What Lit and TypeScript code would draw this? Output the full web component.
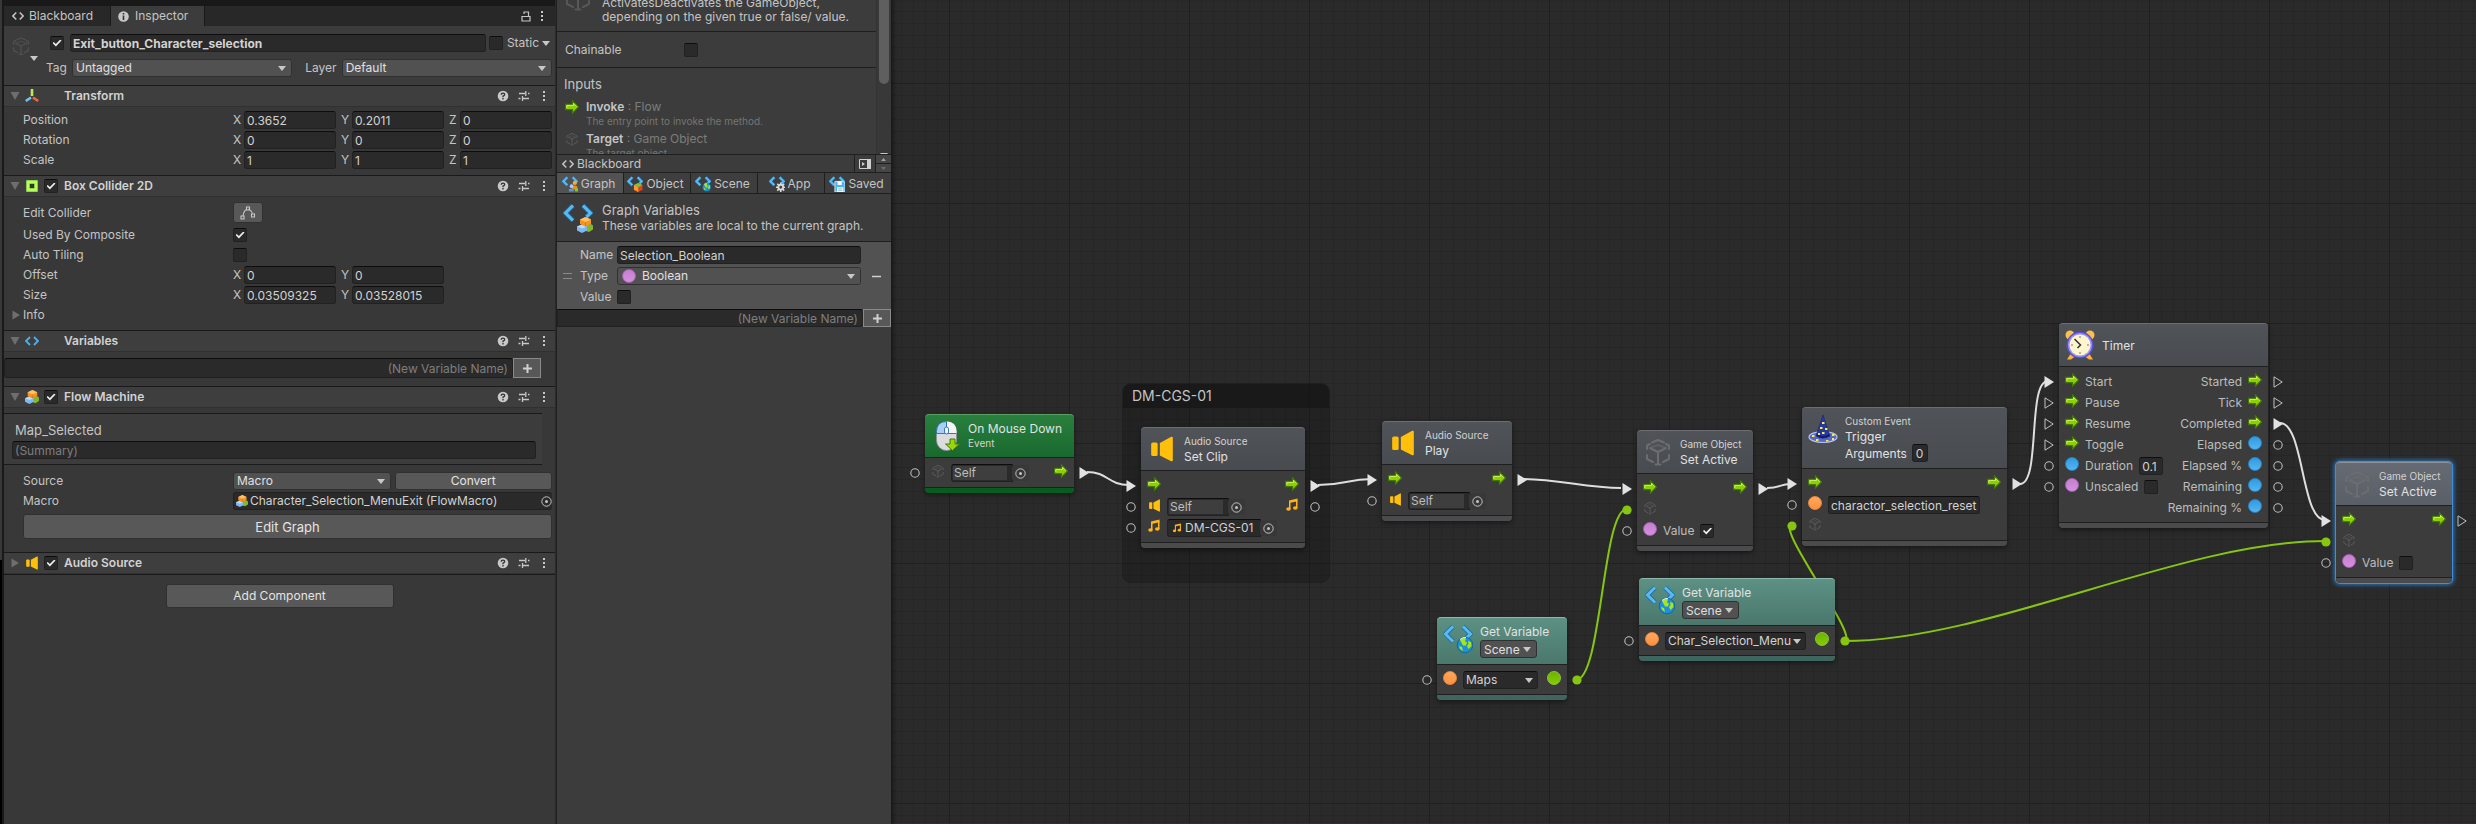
import { LitElement, html, css, svg, nothing, TemplateResult } from "lit";
import { customElement, property } from "lit/decorators.js";
import { classMap } from "lit/directives/class-map.js";
import { styleMap } from "lit/directives/style-map.js";

/* ---------- icons ---------- */

const flowArrow = html`<svg class="ico" width="14" height="14" viewBox="0 0 14 14" aria-hidden="true">
  <path d="M.7 4.3h6.8V.9l6 6.1-6 6.1V9.7H.7z" fill="#8fce00" stroke="#3f7a05" stroke-width="1.2"/>
  <path d="M1.8 8V5.400h6.800V3.400l3.400 3.400" fill="none" stroke="#cdf25e" stroke-width="1"/></svg>`;

const cube = (size = 14, tone = "#5a5a5a") => html`<svg class="ico" width=${size} height=${size} viewBox="0 0 30 30" fill="none" stroke=${tone} stroke-width="2" stroke-linejoin="round" aria-hidden="true">
  <path d="M9 5.500 15 3l6 2.500M4 12V8.500l3-1.500M23 7l3 1.500V12M4 18v4l6 3M26 18v4l-6 3M15 15v12M15 15l-8-4M15 15l8-4M12.500 27.500h5" stroke-linecap="round"/>
  <path d="M8 10.500 15 8l7 2.500" opacity=".55"/></svg>`;

const speaker = (size = 14) => html`<svg class="ico" width=${size} height=${size} viewBox="0 0 24 24" fill="#ffbf0a" aria-hidden="true">
  <rect x="2" y="6" width="6" height="12.500" rx="1.500"/><path d="M10 6.500 20.500 .800q1.500-.5 1.500 1v20.400q0 1.500-1.500 1L10 18z"/></svg>`;

const notes = (size = 14) => html`<svg class="ico" width=${size} height=${size} viewBox="0 0 14 14" fill="#ffb31a" aria-hidden="true">
  <path d="M4 2.400 12.500.600v2.600L5.500 4.700v6H4z"/><path d="M11 2h1.500v8H11z"/><ellipse cx="3.500" cy="11" rx="2.300" ry="1.800"/><ellipse cx="10.300" cy="10" rx="2.300" ry="1.800"/></svg>`;

const blocksShape = (x: number, y: number, s: number) => svg`<g transform="translate(${x} ${y}) scale(${s})">
  <path d="M10 8l4-1 2 1.500v4l-4 2.500-3-1z" fill="#7fb82e"/>
  <path d="M0 9.500 5 7.500l5 2v4L5 16l-5-2.500z" fill="#7db8f2"/><path d="M0 9.500l5-2 5 2-5 2z" fill="#b9dcff"/>
  <path d="M3 2.500 8.500 0 14 2.500v4.500L8.500 9.500 3 7z" fill="#f7941d"/><path d="M3 2.500 8.500 0 14 2.500 8.500 5z" fill="#ffc069"/>
  <path d="M8.500 5v4.500" stroke="#c96c08" stroke-width=".6"/></g>`;

const blocks = (size = 14) => html`<svg class="ico" width=${size} height=${size} viewBox="0 0 16 16" aria-hidden="true">${blocksShape(0, 0, 1)}</svg>`;

const chevrons = (w: number) => svg`
  <path d="M10 2.500 2.500 10 10 17.500" fill="none" stroke="#1d6fa8" stroke-width=${w + 1.6}/><path d="M20 2.500l7.500 7.500-4 4" fill="none" stroke="#1d6fa8" stroke-width=${w + 1.6}/>
  <path d="M10 2.500 2.500 10 10 17.500" fill="none" stroke="#5bb9f0" stroke-width=${w}/><path d="M20 2.500l7.500 7.500-4 4" fill="none" stroke="#5bb9f0" stroke-width=${w}/>`;

const badges: Record<string, TemplateResult> = {
  globe: svg`<circle cx="22" cy="21" r="7.800" fill="#1e8fdc" stroke="#0d5f9c" stroke-width=".8"/><path d="M17 16q3-3 6-1.500l-1 3 2 1-1 3h-3zM25 17l3 1 .5 4-3 3-1.500-3 1.500-2zM16 22l3 1 1 4-3-2z" fill="#a8e619"/><path d="M17 15.500q3-2.500 6-2" stroke="#e8fbff" fill="none"/>`,
  blocks: blocksShape(14, 14, 1),
  people: svg`<circle cx="24" cy="13" r="4" fill="#f9a63a"/><path d="M19 25v-5q5-4 10 0v5z" fill="#f28a17"/><circle cx="18" cy="19" r="3.500" fill="#9fd0ff"/><path d="M13 29v-4q5-3 9 0v4z" fill="#4f9be0"/><path d="M24 23h6v6h-6z" fill="#7ecb2d"/>`,
  cube: svg`<path d="M13 17l8-4 8 4v9l-8 4-8-4z" fill="#e8401c"/><path d="M13 17l8-4 8 4-8 4z" fill="#78c832"/><path d="M13 17l8 4v9l-8-4z" fill="#ff9a2e"/>`,
  gear: svg`<path d="M22 12v18M13 21h18M15.500 14.500l13 13M28.500 14.500l-13 13" stroke="#d9d9d9" stroke-width="3"/><circle cx="22" cy="21" r="4.500" fill="#444" stroke="#d9d9d9" stroke-width="3.500"/>`,
  disk: svg`<path d="M11 10h16l3 3v17H11z" fill="#4fb3ea" stroke="#e6f6ff" stroke-width="1.500"/><path d="M16 10h8v7h-8zM15 21h12v9H15z" fill="#f2fbff"/><path d="M17 24h8M17 27h8" stroke="#3b8ec0"/>`,
};

const variableIcon = (badge: string, size = 30) => html`<svg class="ico" width=${size} height=${size} viewBox="0 0 30 30" aria-hidden="true">${chevrons(size > 20 ? 3 : 4)}${badges[badge]}</svg>`;

const mouse = html`<svg class="ico" width="30" height="30" viewBox="0 0 30 30" aria-hidden="true">
  <rect x="5.500" y=".5" width="20" height="29" rx="10" fill="#dcdcdf" stroke="#8a8f98" stroke-width=".8"/>
  <path d="M15.500.500q10 0 10 10v2h-10z" fill="#f5f5f7"/><path d="M5.500 12.500v-2q0-10 10-10v12z" fill="#a9d0f2" stroke="#2e6fb5"/><path d="M5.500 12.500h20" stroke="#3c77b5"/>
  <rect x="13.500" y="6" width="4" height="7" rx="2" fill="#eef6ff" stroke="#3c77b5"/>
  <path d="M19 18h5v5h4.500L21.500 29.500 14.500 23H19z" fill="#9ad60a" stroke="#3f7a05"/></svg>`;

const hat = html`<svg class="ico" width="30" height="30" viewBox="0 0 30 30" aria-hidden="true">
  <ellipse cx="15" cy="23" rx="14" ry="5.500" fill="#5668c8" stroke="#b9c3f5" stroke-width="1.200"/>
  <path d="M15 1 8 22q7 4.500 14 0z" fill="#2439a8" stroke="#15247a" stroke-width=".6"/><path d="M9 21q6 4 12.500 0" stroke="#101c66" stroke-width="2" fill="none"/>
  <path fill="#ffe93b" d="M14 8h2.500v2H14zM12 13h2.500v2H12zM17 14h2.500v2H17zM14 18h2.500v2H14zM10 19h2v2h-2zM4 21h2.500v2H4zM24 20h2.500v2H24zM8 25h2.500v2H8zM18 26h2.500v1.500H18zM24 24h2v2h-2z"/></svg>`;

const clock = html`<svg class="ico" width="30" height="30" viewBox="0 0 30 30" aria-hidden="true">
  <circle cx="5" cy="5" r="4.500" fill="#ffbf4d"/><circle cx="25" cy="5" r="4.500" fill="#ffbf4d"/><path d="M6 23l-4 6.500h4l4-3zM24 23l4 6.500h-4l-4-3z" fill="#ffb22e"/>
  <circle cx="15" cy="15" r="13.500" fill="#5a4fcf"/><circle cx="15" cy="15" r="12" fill="#9a94f0"/><circle cx="15" cy="15" r="10.500" fill="#fff6cf"/>
  <path d="M15 6v2M15 22v2M6 15h2M22 15h2" stroke="#777"/><path d="M9.500 9l6 6-3 3" fill="none" stroke="#333" stroke-width="1.500"/></svg>`;

const axes = html`<svg class="ico" width="14" height="14" viewBox="0 0 14 14" stroke-width="2.600" aria-hidden="true"><path d="M7 0v7" stroke="#b5f04a"/><path d="M6 8.500.8 12" stroke="#6fc6f5"/><path d="M8 8.500l5.200 3.500" stroke="#f0683a"/></svg>`;
const colliderIcon = html`<svg class="ico" width="14" height="14" viewBox="0 0 14 14" aria-hidden="true"><path d="M3 3h8v8H3z" fill="#2e3a20" stroke="#b4ff5a" stroke-width="3.400"/></svg>`;
const codeIcon = (tone: string, size = 14) => html`<svg class="ico" width=${size} height=${size} viewBox="0 0 14 14" fill="none" stroke=${tone} stroke-width="1.800" aria-hidden="true"><path d="M5 3 1 7l4 4M9 3l4 4-4 4"/></svg>`;
const foldout = (open: boolean) => html`<svg class="ico" width="10" height="10" viewBox="0 0 10 10" fill="#6e6e6e" aria-hidden="true"><path d=${open ? "M.5 1h9L5 9z" : "M1.500.5 9 5l-7.500 4.500z"}/></svg>`;
const dots = html`<svg class="ico" width="10" height="14" viewBox="0 0 10 14" fill="#c8c8c8" aria-hidden="true"><path d="M4 2h2v2H4zM4 6h2v2H4zM4 10h2v2H4z"/></svg>`;
const help = html`<svg class="ico" width="12" height="12" viewBox="0 0 12 12" aria-hidden="true"><circle cx="6" cy="6" r="5.300" fill="#c8c8c8"/><path d="M4.300 4.800q0-1.700 1.700-1.700t1.700 1.400Q7.700 5.600 6 6.200v1M6 8v1.400" fill="none" stroke="#333" stroke-width="1.300"/></svg>`;
const sliders = html`<svg class="ico" width="12" height="12" viewBox="0 0 12 12" stroke="#c8c8c8" stroke-width="1.300" aria-hidden="true"><path d="M1 3.500h6M10 3.500h1.500M7.800 1v5M.5 8.500h2M5 8.500h6M4.500 6v5"/></svg>`;
const info = html`<svg class="ico" width="11" height="11" viewBox="0 0 11 11" aria-hidden="true"><circle cx="5.500" cy="5.500" r="5.300" fill="#c8c8c8"/><path d="M5.500 2v1.500M5.500 4.500V9" stroke="#333" stroke-width="1.600"/></svg>`;
const lock = html`<svg class="ico" width="10" height="11" viewBox="0 0 10 11" fill="none" stroke="#c4c4c4" stroke-width="1.200" aria-hidden="true"><path d="M1 5.500h8V10H1zM3 3V1h4.500v4.500"/></svg>`;
const vertices = html`<svg class="ico" width="16" height="14" viewBox="0 0 16 14" fill="none" stroke="#c8c8c8" stroke-width="1.100" aria-hidden="true"><path d="M3 10Q3.500 5 7 3M8.500 3Q12 5 12.500 8M6.500 1h3v3h-3zM1 10h3v3H1zM11.500 8h3v3h-3z"/></svg>`;
const caret = html`<svg class="caret" width="8" height="5" viewBox="0 0 8 5" fill="#c8c8c8" aria-hidden="true"><path d="M0 0h8L4 5z"/></svg>`;
const target = html`<svg class="ico" width="11" height="11" viewBox="0 0 11 11" fill="none" stroke="#c4c4c4" aria-hidden="true"><circle cx="5.500" cy="5.500" r="4.700"/><circle cx="5.500" cy="5.500" r="1.500" fill="#c4c4c4" stroke="none"/></svg>`;
const plus = html`<svg class="ico" width="9" height="9" viewBox="0 0 9 9" stroke="#d0d0d0" stroke-width="2" aria-hidden="true"><path d="M0 4.500h9M4.500 0v9"/></svg>`;
const minus = html`<svg class="ico" width="9" height="9" viewBox="0 0 9 9" stroke="#d0d0d0" stroke-width="1.500" aria-hidden="true"><path d="M0 4.500h9"/></svg>`;
const dock = html`<svg class="ico" width="12" height="10" viewBox="0 0 12 10" aria-hidden="true"><path d="M.5.500h11v9H.5z" fill="none" stroke="#d0d0d0"/><path d="M8 0h4v10H8zM3 3l3 2-3 2z" fill="#d0d0d0"/></svg>`;

/* ---------- shared styles ---------- */

const base = css`
  * { box-sizing: border-box; }
  :host { font: 12px/16px Inter, "Liberation Sans", sans-serif; color: #c4c4c4; }
  .ico, .caret { display: block; flex: none; }
  button, input, select { font: inherit; color: #d2d2d2; margin: 0; }
  button { display: inline-flex; align-items: center; justify-content: center; padding: 0; border: 1px solid #303030; border-radius: 3px; background: #585858; color: #e4e4e4; }
  button.plain { border: 0; background: none; }
  input.field { display: block; width: 100%; min-width: 0; height: 18px; padding: 0 2px; border: 1px solid #212121; border-top-color: #0d0d0d; border-radius: 3px; background: #2a2a2a; outline: 0; }
  input::placeholder { color: #7e7e7e; opacity: 1; }
  input[type="checkbox"] { appearance: none; display: grid; place-items: center; flex: none; width: 14px; height: 14px; border: 1px solid #212121; border-top-color: #0d0d0d; border-radius: 2px; background: #2a2a2a; }
  input[type="checkbox"]:checked::before { content: ""; width: 9px; height: 7px; background: #eee; clip-path: polygon(0 50%, 14% 34%, 37% 64%, 86% 0, 100% 14%, 38% 100%); }
  .drop { display: grid; align-items: center; height: 18px; border: 1px solid #303030; border-radius: 3px; background: #515151; }
  .drop > * { grid-area: 1 / 1; }
  .drop .caret { justify-self: end; margin-right: 5px; pointer-events: none; }
  .drop select { appearance: none; width: 100%; min-width: 0; height: 16px; padding: 0 3px; border: 0; background: none; color: #e0e0e0; outline: 0; }
  .ball { display: block; flex: none; width: 14px; height: 14px; border: 1px solid; border-radius: 50%; }
  .ball.orange { background: linear-gradient(#ffa75c, #ff9140); border-color: #e8893e; }
  .ball.pink { background: linear-gradient(#c57fd0, #d490de); border-color: #a85fb5; }
  .ball.blue { background: linear-gradient(#2f9be2, #56b5f0); border-color: #2b83c4; }
  .ball.green { background: linear-gradient(#6bb300, #85cc00); border-color: #8cc63a; }
`;

const dropDown = (label: string, value: string, cls = "") =>
  html`<span class="drop ${cls}"><select aria-label=${label}><option>${value}</option></select>${caret}</span>`;

/* ---------- inspector ---------- */

@customElement("inspector-panel")
class InspectorPanel extends LitElement {
  static styles = [base, css`
    :host { display: flex; flex-direction: column; background: #383838; }
    .strip { height: 6px; background: #191919; }
    .tabs { display: flex; height: 20px; background: #282828; }
    .tab { gap: 5px; padding: 0 17px 0 8px; border: 0; border-radius: 0; background: none; color: #c4c4c4; }
    .tab.on { gap: 6px; padding: 0 16px 0 7px; border: solid #191919; border-width: 0 1px; background: #3c3c3c; }
    .tabs .end { display: flex; align-items: center; gap: 6px; margin-left: auto; padding-right: 8px; }
    .object { display: grid; grid-template-columns: 42px 1fr; height: 59px; padding-top: 8px; background: #3c3c3c; }
    .thumb { display: grid; align-content: start; justify-items: end; padding: 2px 8px 0 7px; }
    .thumb .ico { justify-self: start; }
    .lines { display: grid; align-content: start; gap: 7px; }
    .line { display: flex; align-items: center; height: 18px; }
    .line.top { gap: 3px; padding: 0 5px 0 4px; }
    .line.top .field { flex: 1; margin-left: 3px; font-weight: 700; }
    .line.top label { display: flex; align-items: center; gap: 4px; }
    .line.pick { gap: 5px; padding-right: 3px; }
    .line.pick .tag { flex: 22; margin-right: 8px; }
    .line.pick .layer { flex: 21; }
    section { border-top: 1px solid #1a1a1a; }
    h2 { display: flex; align-items: center; gap: 5px; height: 21px; margin: 0; padding: 0 6px; border-bottom: 1px solid #303030; background: #3e3e3e; font: inherit; font-weight: 600; color: #d2d2d2; }
    h2 .title { flex: 1; }
    h2 .slot { width: 15px; }
    h2 .tools { display: flex; align-items: center; gap: 9px; }
    .rows { display: grid; gap: 2px; padding: 4px 3px 6px 19px; }
    .row { display: grid; grid-template-columns: 210px 1fr; align-items: center; height: 18px; }
    .row.tall { height: 23px; }
    .axes { display: grid; grid-template-columns: repeat(3, 1fr); gap: 5px; }
    .axes label { display: grid; grid-template-columns: 9px 1fr; gap: 2px; align-items: center; }
    .edit { width: 30px; height: 21px; }
    .info { display: flex; align-items: center; gap: 2px; height: 18px; margin-left: -12px; }
    .new { display: flex; padding: 6px 14px 8px 0; }
    .new .field { height: 20px; padding-right: 4px; text-align: right; }
    .new button { flex: none; width: 28px; height: 20px; border-color: #8a8a8a; border-radius: 0; }
    .graph { margin: 5px 13px 0 0; padding: 7px 6px 5px 8px; border: solid #1a1a1a; border-width: 1px 0; background: #3c3c3c; }
    .graph h3 { margin: 0 0 2px 3px; font: inherit; font-size: 13px; line-height: 18px; }
    .split { display: grid; grid-template-columns: 1fr 1fr; gap: 4px; }
    .split button { height: 18px; }
    .wide { height: 25px; margin: 2px 0 7px; font-size: 13px; }
    .ref { display: grid; grid-template-columns: 14px 1fr 11px; align-items: center; height: 18px; padding-left: 2px; border: 1px solid #212121; border-right: 0; border-radius: 3px; background: #2a2a2a; }
    .ref input { min-width: 0; padding: 0; border: 0; background: none; }
    .flow { padding-top: 7px; }
    .tail { display: grid; justify-items: center; padding: 9px 0; border-top: 1px solid #1a1a1a; }
    .add { width: 228px; height: 24px; }
  `];

  private heading(title: string, icon: TemplateResult, open: boolean, toggle: boolean) {
    return html`<h2>${foldout(open)}${icon}
      <span class="slot">${toggle ? html`<input type="checkbox" checked aria-label="${title} enabled">` : nothing}</span>
      <span class="title">${title}</span>
      <span class="tools">
        <button class="plain" aria-label="Help">${help}</button><button class="plain" aria-label="Presets">${sliders}</button><button class="plain" aria-label="More">${dots}</button>
      </span></h2>`;
  }

  private vector(name: string, values: string[]) {
    return html`<div class="row"><span>${name}</span><div class="axes">
      ${values.map((v, i) => html`<label>${"XYZ"[i]}<input class="field" .value=${v} aria-label="${name} ${"XYZ"[i]}"></label>`)}</div></div>`;
  }

  render() {
    return html`
      <div class="strip"></div>
      <nav class="tabs">
        <button class="tab">${codeIcon("#c4c4c4", 12)}Blackboard</button>
        <button class="tab on">${info}Inspector</button>
        <span class="end">${lock}${dots}</span>
      </nav>
      <header class="object">
        <div class="thumb">${cube(20, "#505050")}${caret}</div>
        <div class="lines">
          <div class="line top">
            <input type="checkbox" checked aria-label="Active">
            <input class="field" .value=${"Exit_button_Character_selection"} aria-label="Object name">
            <label><input type="checkbox">Static</label>${caret}
          </div>
          <div class="line pick">Tag${dropDown("Tag", "Untagged", "tag")}Layer${dropDown("Layer", "Default", "layer")}</div>
        </div>
      </header>
      <section>
        ${this.heading("Transform", axes, true, false)}
        <div class="rows">
          ${this.vector("Position", ["0.3652", "0.2011", "0"])}
          ${this.vector("Rotation", ["0", "0", "0"])}
          ${this.vector("Scale", ["1", "1", "1"])}
        </div>
      </section>
      <section>
        ${this.heading("Box Collider 2D", colliderIcon, true, true)}
        <div class="rows">
          <div class="row tall"><span>Edit Collider</span><button class="edit" aria-label="Edit Collider">${vertices}</button></div>
          <div class="row"><label for="comp">Used By Composite</label><input id="comp" type="checkbox" checked></div>
          <div class="row"><label for="tile">Auto Tiling</label><input id="tile" type="checkbox"></div>
          ${this.vector("Offset", ["0", "0"])}
          ${this.vector("Size", ["0.03509325", "0.03528015"])}
          <div class="info">${foldout(false)}Info</div>
        </div>
      </section>
      <section>
        ${this.heading("Variables", codeIcon("#4fb0ea"), true, false)}
        <div class="new"><input class="field" placeholder="(New Variable Name)" aria-label="New variable name"><button aria-label="Add variable">${plus}</button></div>
      </section>
      <section>
        ${this.heading("Flow Machine", blocks(14), true, true)}
        <div class="graph"><h3>Map_Selected</h3><input class="field" placeholder="(Summary)" aria-label="Summary"></div>
        <div class="rows flow">
          <div class="row"><span>Source</span><div class="split">${dropDown("Source", "Macro")}<button>Convert</button></div></div>
          <div class="row"><label for="macro">Macro</label><div class="ref">${blocks(12)}<input id="macro" .value=${"Character_Selection_MenuExit (FlowMacro)"}><button class="plain" aria-label="Pick macro">${target}</button></div></div>
          <button class="wide">Edit Graph</button>
        </div>
      </section>
      <section>${this.heading("Audio Source", speaker(14), false, true)}</section>
      <div class="tail"><button class="add">Add Component</button></div>`;
  }
}

/* ---------- unit help and blackboard ---------- */

@customElement("blackboard-panel")
class BlackboardPanel extends LitElement {
  static styles = [base, css`
    :host { display: flex; flex-direction: column; border-left: 1px solid #202020; background: #3c3c3c; }
    .help { display: grid; grid-template-columns: 1fr 15px; height: 154px; overflow: hidden; }
    .page { min-width: 0; }
    .intro { display: flex; gap: 9px; height: 50px; margin-top: -18px; padding-left: 6px; border-bottom: 1px solid #1f1f1f; }
    .intro p { margin: 14px 0 0; line-height: 14px; }
    .chain { display: grid; grid-template-columns: 119px 1fr; align-items: center; height: 36px; padding-left: 8px; border-bottom: 1px solid #1f1f1f; }
    .page h3 { margin: 7px 0 6px 7px; font: inherit; font-size: 13px; line-height: 18px; }
    .port { display: grid; grid-template-columns: 14px 1fr; column-gap: 7px; align-items: center; padding-left: 8px; height: 32px; align-content: start; color: #7c7c7c; }
    .port b { font-weight: 600; color: #c4c4c4; }
    .port small { grid-column: 2; font-size: 10px; line-height: 12px; color: #757575; }
    .bar { display: grid; grid-template-rows: 84px 1fr; justify-items: center; border-left: 1px solid #343434; background: #383838; }
    .bar i { width: 10px; border-radius: 0 0 5px 5px; background: #5f5f5f; }
    .bar .caret { align-self: end; margin-bottom: 5px; }
    .title { display: flex; align-items: center; height: 19px; border: solid #1f1f1f; border-width: 1px 0; }
    .title span { flex: 1; display: flex; align-items: center; gap: 3px; padding-left: 5px; }
    .title .dock { width: 22px; height: 17px; border: solid #1f1f1f; border-width: 0 1px; border-radius: 0; background: none; }
    .spin { display: grid; width: 15px; height: 17px; background: #1f1f1f; gap: 1px; }
    .spin i { display: grid; place-items: center; background: #464646; }
    .spin .caret { width: 5px; height: 3px; opacity: .7; }
    .spin i:first-child .caret { rotate: 180deg; }
    .spin i:last-child .caret { opacity: .3; }
    .tabs { display: grid; grid-template-columns: repeat(5, 1fr); gap: 1px; height: 21px; border-bottom: 1px solid #1f1f1f; background: #1f1f1f; }
    .tabs button { gap: 3px; padding: 1px 3px 0 0; border: 0; border-radius: 0; background: #3e3e3e; color: #c4c4c4; }
    .tabs button.on { background: #525252; }
    .about { display: flex; gap: 9px; align-items: center; height: 48px; padding-left: 6px; border-bottom: 1px solid #1f1f1f; }
    .about h3 { margin: 0; font: inherit; font-size: 13px; line-height: 16px; }
    .about p { margin: 0; }
    .vars { display: grid; grid-template-columns: 37px 244px 1fr; grid-template-rows: repeat(3, 18px); align-items: center; gap: 3px 0; height: 67px; padding: 4px 0 0 23px; background: #525252; }
    .vars .type { display: grid; grid-template-columns: 17px 1fr; align-items: center; height: 18px; padding-left: 4px; border: 1px solid #303030; border-radius: 3px; background: #515151; }
    .vars .drop { border: 0; height: 16px; }
    .vars > button { justify-self: center; grid-row: 1 / 4; grid-column: 3; }
    .vars label { grid-column: 1; }
    .grip { display: flex; align-items: center; gap: 8px; margin-left: -17px; }
    .grip::before { content: ""; width: 9px; height: 4px; border: solid #8a8a8a; border-width: 1px 0; }
    .new { display: flex; height: 18px; }
    .new .field { border-radius: 0 3px 3px 0; text-align: right; padding-right: 4px; }
    .new button { flex: none; width: 28px; height: 18px; border-color: #8a8a8a; border-radius: 0; }
  `];

  render() {
    const tabs = [["Graph", "people"], ["Object", "cube"], ["Scene", "globe"], ["App", "gear"], ["Saved", "disk"]];
    return html`
      <div class="help">
        <div class="page">
          <div class="intro">${cube(30, "#575757")}<p>ActivatesDeactivates the GameObject,<br>depending on the given true or false/ value.</p></div>
          <div class="chain"><label for="chain">Chainable</label><input id="chain" type="checkbox"></div>
          <h3>Inputs</h3>
          <div class="port">${flowArrow}<span><b>Invoke</b> : Flow</span><small>The entry point to invoke the method.</small></div>
          <div class="port">${cube(14)}<span><b>Target</b> : Game Object</span><small>The target object</small></div>
        </div>
        <div class="bar"><i></i>${caret}</div>
      </div>
      <div class="title"><span>${codeIcon("#c4c4c4", 12)}Blackboard</span><button class="dock" aria-label="Dock">${dock}</button><div class="spin"><i>${caret}</i><i>${caret}</i></div></div>
      <nav class="tabs">${tabs.map(([name, badge], i) => html`<button class=${classMap({ on: i === 0 })}>${variableIcon(badge, 16)}${name}</button>`)}</nav>
      <div class="about">${variableIcon("blocks")}<div><h3>Graph Variables</h3><p>These variables are local to the current graph.</p></div></div>
      <div class="vars">
        <label for="name">Name</label><input id="name" class="field" .value=${"Selection_Boolean"}>
        <label class="grip" for="type">Type</label><span class="type"><span class="ball pink"></span><span class="drop"><select id="type"><option>Boolean</option></select>${caret}</span></span>
        <label for="value">Value</label><input id="value" type="checkbox">
        <button class="plain" aria-label="Remove variable">${minus}</button>
      </div>
      <div class="new"><input class="field" placeholder="(New Variable Name)" aria-label="New variable name"><button aria-label="Add variable">${plus}</button></div>`;
  }
}

/* ---------- flow graph ---------- */

type Socket = "flow" | "flow-on" | "value" | "value-on";

interface Port {
  socket: Socket;
  icon: unknown;
  body?: unknown;
}

interface UnitData {
  x: number;
  y: number;
  w: number;
  tone?: string;
  icon: unknown;
  head: unknown;
  ins: Port[];
  outs: Port[];
}

const socketShape = (kind: Socket) => {
  const shapes: Record<Socket, unknown> = {
    "flow": svg`<path d="M1 .8v10.400L9.200 6z" fill="none" stroke="#c0c0c0"/>`,
    "flow-on": svg`<path d="M.5 0v12L10 6z" fill="#e2e2e2"/>`,
    "value": svg`<circle cx="5" cy="6" r="4.200" fill="none" stroke="#bdbdbd" stroke-width="1.100"/>`,
    "value-on": svg`<circle cx="5" cy="6" r="4.600" fill="#86c610"/>`,
  };
  return html`<svg class="socket" width="10" height="12" viewBox="0 0 10 12" aria-hidden="true">${shapes[kind]}</svg>`;
};

const ball = (tone: string) => html`<span class="ball ${tone}"></span>`;
const picker = (value: string, filled = false) => html`<span class="picker">
  <span class=${classMap({ box: true, filled })}>${filled ? notes(10) : nothing}<input .value=${value} aria-label="Target"></span>
  <button aria-label="Pick">${target}</button></span>`;
const check = (label: string, on = false) => html`<label class="tick">${label}<input type="checkbox" ?checked=${on}></label>`;
const titles = (small: string, big: string) => html`<small>${small}</small><span>${big}</span>`;
const combo = (value: string, cls: string) => html`<span class="combo ${cls}"><select aria-label="Variable"><option>${value}</option></select>${caret}</span>`;
const sceneHead = html`<span>Get Variable</span>${dropDown("Scope", "Scene", "scope")}`;

const flowIn: Port = { socket: "flow-on", icon: flowArrow };

const setActive = (x: number, y: number, tone: string, on: boolean, out: Socket): UnitData => ({
  x, y, w: 116, tone, icon: cube(30, "#6b6d70"), head: titles("Game Object", "Set Active"),
  ins: [flowIn, { socket: "value-on", icon: cube(14) }, { socket: "value", icon: ball("pink"), body: check("Value", on) }],
  outs: [{ socket: out, icon: flowArrow }],
});

const getVariable = (x: number, y: number, w: number, name: string, cls: string): UnitData => ({
  x, y, w, tone: "teal", icon: variableIcon("globe"), head: sceneHead,
  ins: [{ socket: "value", icon: ball("orange"), body: combo(name, cls) }],
  outs: [{ socket: "value-on", icon: ball("green") }],
});

const units: UnitData[] = [
  {
    x: 34, y: 414, w: 149, tone: "green", icon: mouse, head: html`<span>On Mouse Down</span><small>Event</small>`,
    ins: [{ socket: "value", icon: cube(14), body: picker("Self") }],
    outs: [{ socket: "flow-on", icon: flowArrow }],
  },
  {
    x: 250, y: 427, w: 164, icon: speaker(26), head: titles("Audio Source", "Set Clip"),
    ins: [flowIn, { socket: "value", icon: speaker(13), body: picker("Self") }, { socket: "value", icon: notes(), body: picker("DM-CGS-01", true) }],
    outs: [{ socket: "flow-on", icon: flowArrow }, { socket: "value", icon: notes() }],
  },
  {
    x: 491, y: 421, w: 130, icon: speaker(26), head: titles("Audio Source", "Play"),
    ins: [flowIn, { socket: "value", icon: speaker(13), body: picker("Self") }],
    outs: [{ socket: "flow-on", icon: flowArrow }],
  },
  setActive(746, 430, "", true, "flow-on"),
  {
    x: 911, y: 407, w: 205, tone: "hat", icon: hat,
    head: html`<small>Custom Event</small><span>Trigger</span><label class="args">Arguments<input class="field" .value=${"0"}></label>`,
    ins: [flowIn, { socket: "value", icon: ball("orange"), body: html`<input class="field event" .value=${"charactor_selection_reset"} aria-label="Event name">` }, { socket: "value-on", icon: cube(14) }],
    outs: [{ socket: "flow-on", icon: flowArrow }],
  },
  {
    x: 1168, y: 323, w: 209, icon: clock, head: html`<span>Timer</span>`,
    ins: [
      { ...flowIn, body: "Start" },
      ...["Pause", "Resume", "Toggle"].map((body): Port => ({ socket: "flow", icon: flowArrow, body })),
      { socket: "value", icon: ball("blue"), body: html`<label class="tick">Duration<input class="field seconds" .value=${"0.1"}></label>` },
      { socket: "value", icon: ball("pink"), body: check("Unscaled") },
    ],
    outs: [
      { socket: "flow", icon: flowArrow, body: "Started" },
      { socket: "flow", icon: flowArrow, body: "Tick" },
      { socket: "flow-on", icon: flowArrow, body: "Completed" },
      ...["Elapsed", "Elapsed %", "Remaining", "Remaining %"].map((body): Port => ({ socket: "value", icon: ball("blue"), body })),
    ],
  },
  setActive(1445, 462, "picked", false, "flow"),
  getVariable(546, 617, 130, "Maps", "short"),
  getVariable(748, 578, 196, "Char_Selection_Menu", "long"),
];

@customElement("flow-unit")
class FlowUnit extends LitElement {
  static styles = [base, css`
    :host { display: block; color: #bdbdbd; }
    .unit { border-radius: 4px; background: #3c3c3c; box-shadow: 0 2px 5px rgba(0, 0, 0, .45); }
    header { display: flex; gap: 7px; min-height: 42px; padding: 6px; border-top: 1px solid #6b6e72; border-radius: 4px 4px 0 0; background: linear-gradient(#505358, #484b50); color: #e2e2e2; }
    .mark { display: grid; place-items: center; width: 30px; height: 30px; flex: none; }
    .head { display: grid; align-content: center; justify-items: start; line-height: 15px; white-space: nowrap; }
    .head small { font-size: 10px; line-height: 15px; color: #d2d2d2; }
    .rows { display: grid; gap: 3px; padding: 6px 0 5px; border: solid #1f1f1f; border-width: 1px 0; }
    .row { display: flex; justify-content: space-between; height: 18px; margin: 0 -15px; }
    .side { display: flex; align-items: center; gap: 6px; white-space: nowrap; }
    .side .socket { margin-right: 5px; flex: none; }
    .side.out .socket { margin: 0 0 0 5px; }
    .pic { display: grid; place-items: center; width: 14px; height: 14px; margin-bottom: 4px; }
    footer { height: 5px; border-radius: 0 0 4px 4px; background: #4b4b4e; }
    .green header { background: linear-gradient(#2a7f3e, #19692e); border-color: #56a066; }
    .green footer { background: #075c20; }
    .teal header { min-height: 47px; background: linear-gradient(#5c9184, #4b776c); border-color: #8fb8ae; }
    .teal footer { background: #3f655f; }
    .teal .head { gap: 1px; margin: -2px 0; }
    .hat header { min-height: 61px; }
    .hat .head { margin: -2px 0; }
    .picked .unit { box-shadow: 0 0 0 1px #3f8fd8, 0 0 4px 2px #2c74b8; }
    .picked header { background: linear-gradient(#666a72, #5a5e66); border-color: #8d9097; }
    .scope { width: 57px; background: #515151; }
    .args { display: flex; align-items: center; gap: 5px; height: 18px; }
    .args input.field { width: 16px; padding: 0 3px; }
    .tick { display: flex; align-items: center; gap: 6px; }
    .tick input.seconds { width: 24px; }
    .side input.event { width: 152px; }
    .picker { display: flex; align-items: center; }
    .box { display: flex; align-items: center; gap: 3px; width: 62px; height: 18px; padding: 1px 5px 1px 1px; border: 1px solid #212121; border-top-color: #0d0d0d; border-radius: 3px 0 0 3px; background: #2a2a2a; }
    .box input { width: 100%; min-width: 0; height: 14px; padding: 0 1px; border: 0; background: #3e3e3e; color: #bdbdbd; outline: 0; }
    .box.filled { width: 94px; padding: 1px 1px 1px 4px; }
    .box.filled input { background: none; padding: 0; color: #d2d2d2; }
    .picker button { width: 17px; height: 16px; margin-left: -1px; border: 0; background: #383838; }
    .combo { display: grid; align-items: center; height: 18px; border: 1px solid #212121; border-top-color: #0d0d0d; border-radius: 3px; background: #2a2a2a; }
    .combo > * { grid-area: 1 / 1; }
    .combo select { appearance: none; height: 16px; padding: 0 2px; border: 0; background: none; outline: 0; min-width: 0; }
    .combo .caret { justify-self: end; margin-right: 4px; pointer-events: none; }
    .combo.short { width: 75px; }
    .combo.long { width: 141px; }
  `];

  @property({ attribute: false }) unit!: UnitData;

  private side(port: Port | undefined, out: boolean) {
    if (!port) return html`<span></span>`;
    const icon = html`<span class="pic">${port.icon}</span>`;
    return out
      ? html`<div class="side out">${port.body ?? nothing}${icon}${socketShape(port.socket)}</div>`
      : html`<div class="side">${socketShape(port.socket)}${icon}${port.body ?? nothing}</div>`;
  }

  render() {
    const { tone = "", icon, head, ins, outs } = this.unit;
    const count = Math.max(ins.length, outs.length);
    return html`<div class=${tone}><article class="unit">
      <header><span class="mark">${icon}</span><div class="head">${head}</div></header>
      <div class="rows">${Array.from({ length: count }, (_, i) => html`<div class="row">${this.side(ins[i], false)}${this.side(outs[i], true)}</div>`)}</div>
      <footer></footer></article></div>`;
  }
}

const whiteWires = [
  "M196 472C217 472 217 485 238 485",
  "M427 485C455 485 455 479 482 479",
  "M630 479C668 479 694 488 730 488",
  "M876 488C890 488 888 484 900 484",
  "M1129 484C1150 484 1136 381 1157 381",
  "M1389 423C1413 423 1410 520 1434 520",
];
const greenWires = [
  "M685 680C711 680 711 509 736 509",
  "M953 641C971 641 884 526 901 526",
  "M953 641C1098 641 1290 541 1435 541",
];

@customElement("flow-graph")
class FlowGraph extends LitElement {
  static styles = [base, css`
    :host {
      display: block; position: relative; overflow: hidden; background-color: #2a2a2a;
      background-image:
        linear-gradient(90deg, #202020 1px, transparent 1px), linear-gradient(#202020 1px, transparent 1px),
        linear-gradient(90deg, #262626 1px, transparent 1px), linear-gradient(#262626 1px, transparent 1px);
      background-size: 120px 120px, 120px 120px, 12px 12px, 12px 12px;
      background-position: 58px 83px, 58px 83px, 10px 11px, 10px 11px;
      box-shadow: inset 5px 0 5px -3px rgba(0, 0, 0, .5), inset 0 -1px #382e33;
    }
    .group { position: absolute; left: 231px; top: 383px; width: 208px; height: 200px; border: 1px solid #1f1f1f; border-radius: 9px; background: rgba(20, 20, 20, .35); }
    .group h3 { margin: 0; padding: 0 9px; border-radius: 8px 8px 0 0; background: rgba(20, 20, 20, .6); font: inherit; font-size: 14px; line-height: 24px; }
    .wires { position: absolute; left: 0; top: 0; width: 100%; height: 100%; fill: none; stroke-width: 2; }
    .white { stroke: #dedede; }
    .lime { stroke: #86c610; }
    flow-unit { position: absolute; }
  `];

  render() {
    return html`
      <div class="group"><h3>DM-CGS-01</h3></div>
      <svg class="wires" aria-hidden="true">
        <g class="white">${whiteWires.map((d) => svg`<path d=${d}/>`)}</g>
        <g class="lime">${greenWires.map((d) => svg`<path d=${d}/>`)}</g>
      </svg>
      ${units.map((u) => html`<flow-unit .unit=${u} style=${styleMap({ left: `${u.x}px`, top: `${u.y}px`, width: `${u.w}px` })}></flow-unit>`)}`;
  }
}

/* ---------- shell ---------- */

@customElement("app-root")
class AppRoot extends LitElement {
  static styles = [base, css`
    :host { display: grid; grid-template-columns: 4px 552px 335px 1fr; min-height: 100vh; background: #191919; }
    .edge { border-right: 2px solid #191919; background: linear-gradient(#383838 560px, #000 560px); }
    inspector-panel { border-right: 1px solid #2a2a2a; }
  `];

  render() {
    return html`<div class="edge"></div><inspector-panel></inspector-panel><blackboard-panel></blackboard-panel><flow-graph></flow-graph>`;
  }
}
